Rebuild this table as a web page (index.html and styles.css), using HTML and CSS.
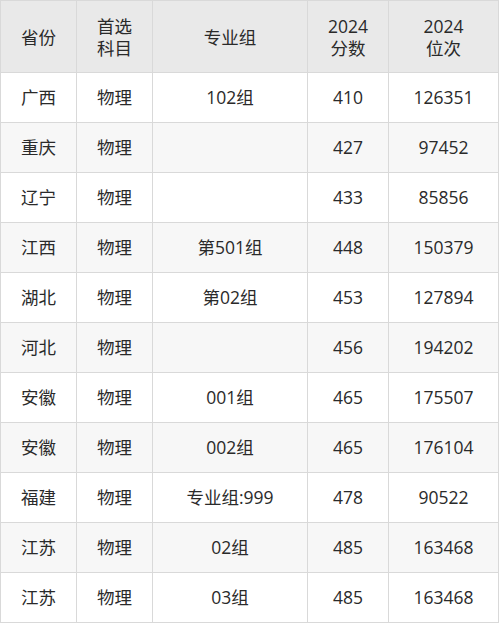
FILE: index.html
```html
<!DOCTYPE html>
<html lang="zh">
<head>
<meta charset="utf-8">
<link rel="stylesheet" href="styles.css">
</head>
<body>
<table class="score-table">
  <colgroup>
    <col class="c1"><col class="c2"><col class="c3"><col class="c4"><col class="c5">
  </colgroup>
  <thead>
    <tr>
      <th>省份</th>
      <th><span class="ln">首选</span><span class="ln">科目</span></th>
      <th>专业组</th>
      <th><span class="ln">2024</span><span class="ln">分数</span></th>
      <th><span class="ln">2024</span><span class="ln">位次</span></th>
    </tr>
  </thead>
  <tbody>
    <tr><td>广西</td><td>物理</td><td>102组</td><td>410</td><td>126351</td></tr>
    <tr><td>重庆</td><td>物理</td><td></td><td>427</td><td>97452</td></tr>
    <tr><td>辽宁</td><td>物理</td><td></td><td>433</td><td>85856</td></tr>
    <tr><td>江西</td><td>物理</td><td>第501组</td><td>448</td><td>150379</td></tr>
    <tr><td>湖北</td><td>物理</td><td>第02组</td><td>453</td><td>127894</td></tr>
    <tr><td>河北</td><td>物理</td><td></td><td>456</td><td>194202</td></tr>
    <tr><td>安徽</td><td>物理</td><td>001组</td><td>465</td><td>175507</td></tr>
    <tr><td>安徽</td><td>物理</td><td>002组</td><td>465</td><td>176104</td></tr>
    <tr><td>福建</td><td>物理</td><td>专业组:999</td><td>478</td><td>90522</td></tr>
    <tr><td>江苏</td><td>物理</td><td>02组</td><td>485</td><td>163468</td></tr>
    <tr><td>江苏</td><td>物理</td><td>03组</td><td>485</td><td>163468</td></tr>
  </tbody>
</table>
</body>
</html>
```
FILE: styles.css
```css
html, body {
  margin: 0;
  padding: 0;
  background: #ffffff;
}
.score-table {
  border-collapse: collapse;
  table-layout: fixed;
  width: 498px;
  font-family: "Open Sans", "Noto Sans CJK SC", sans-serif;
  font-size: 17.5px;
  color: #2a2a2a;
}
.c1 { width: 76px; }
.c2 { width: 76px; }
.c3 { width: 155px; }
.c4 { width: 81px; }
.c5 { width: 110px; }
.score-table th,
.score-table td {
  border: 1px solid #d9d9d9;
  text-align: center;
  padding: 0;
  font-weight: normal;
}
.score-table th {
  height: 71px;
  background: #e9e9e9;
  line-height: 22px;
}
.ln {
  display: block;
  height: 22px;
  line-height: 22px;
}
.score-table td {
  height: 47px;
  padding-bottom: 2px;
}
.score-table tbody tr:nth-child(even) td {
  background: #f7f7f7;
}
```
